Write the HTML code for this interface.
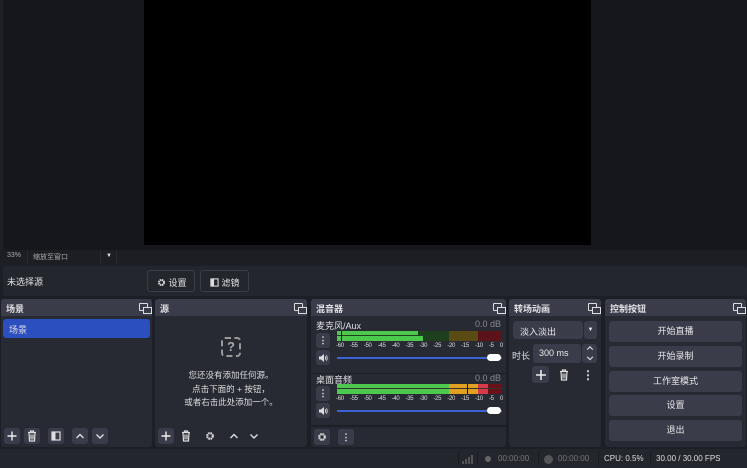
<!DOCTYPE html>
<html><head><meta charset="utf-8"><style>
*{box-sizing:border-box;margin:0;padding:0}
body{width:747px;height:468px;background:#1d1f26;font-family:"Liberation Sans","Noto Sans CJK SC",sans-serif;color:#e0e0e4;position:relative;overflow:hidden;font-size:9px}
.a{position:absolute}
.panel{position:absolute;top:299px;height:148px;background:#272a33;border-radius:3px;overflow:hidden}
.hd{height:17px;background:#3a3d49;font-size:9px;font-weight:bold;padding:3px 5px;position:relative}
.hd i{position:absolute;right:4px;top:4px;width:9px;height:8px;border:1px solid #ddd;border-radius:1px}
.hd i:after{content:"";position:absolute;left:3px;top:3px;width:7px;height:5px;border:1px solid #ddd;background:#3a3d49}
.btn{position:absolute;background:#3a3d49;border-radius:3px;color:#e8e8ea;text-align:center}
.ib{position:absolute;width:16px;height:16px;border-radius:3px;color:#ddd;font-size:12px;text-align:center;line-height:16px}
.ib svg,.btn svg{position:absolute;left:50%;top:50%;transform:translate(-50%,-50%)}
.bar{position:absolute;height:4px}
.tick{position:absolute;width:167px;display:flex;justify-content:space-between;font-size:6px;color:#ddd;letter-spacing:-0.3px}
</style></head><body>
<svg width="0" height="0" style="position:absolute">
<defs>
<symbol id="tr" viewBox="0 0 10 12"><path d="M1 2.5h8M3.5 2.5V1h3v1.5M2 2.5l.5 8.5h5l.5-8.5M4 4.5v5M6 4.5v5" fill="none" stroke="#ddd" stroke-width="1.2"/></symbol>
<symbol id="up" viewBox="0 0 10 10"><path d="M1.5 7L5 3.5 8.5 7" fill="none" stroke="#ddd" stroke-width="1.4"/></symbol>
<symbol id="dn" viewBox="0 0 10 10"><path d="M1.5 3.5L5 7 8.5 3.5" fill="none" stroke="#ddd" stroke-width="1.4"/></symbol>
<symbol id="pl" viewBox="0 0 10 10"><path d="M5 0.5v9M0.5 5h9" stroke="#eee" stroke-width="1.4"/></symbol>
<symbol id="gr" viewBox="0 0 10 10"><circle cx="5" cy="5" r="2.8" fill="none" stroke="#ddd" stroke-width="2.2" stroke-dasharray="1.6 0.6"/><circle cx="5" cy="5" r="1.2" fill="#272a33"/></symbol>
<symbol id="sp" viewBox="0 0 10 10"><path d="M1 3.5h2L6 1v8L3 6.5H1z" fill="#ddd"/><path d="M7.2 3.3q1 1.7 0 3.4M8.4 2.3q1.6 2.7 0 5.4" fill="none" stroke="#ddd" stroke-width="0.9"/></symbol>
<symbol id="fl" viewBox="0 0 10 10"><rect x="1" y="1" width="8" height="8" fill="none" stroke="#ddd" stroke-width="1.2"/><rect x="1" y="1" width="3.5" height="8" fill="#ddd"/></symbol>
</defs></svg>
<div class="a" style="left:0;top:0;width:747px;height:250px;background:#15171c"></div>
<div class="a" style="left:0;top:0;width:3px;height:250px;background:#1e2026"></div>
<div class="a" style="left:144px;top:0;width:447px;height:245px;background:#000"></div>
<div class="a" style="left:0;top:250px;width:747px;height:14px;background:#1c1e24"></div>
<div class="a" style="left:7px;top:252px;font-size:7px;color:#aaa">33%</div>
<div class="a" style="left:27px;top:251px;width:1px;height:12px;background:#2a2d35"></div>
<div class="a" style="left:33px;top:252px;font-size:7px;color:#aaa">缩放至窗口</div>
<div class="a" style="left:100px;top:251px;width:1px;height:12px;background:#2a2d35"></div>
<div class="a" style="left:106px;top:253px;font-size:6px;color:#ddd">▼</div>
<div class="a" style="left:116px;top:251px;width:1px;height:12px;background:#2a2d35"></div>
<div class="a" style="left:3px;top:266px;width:744px;height:30px;background:#24262e;border-radius:3px"></div>
<div class="a" style="left:7px;top:275px;font-size:9px">未选择源</div>
<div class="a" style="left:147px;top:270px;width:48px;height:22px;border:1px solid #3a3d47;border-radius:3px;font-size:9px;padding:5px 0 0 9px"><svg width="9" height="9" style="vertical-align:-1px"><use href="#gr"/></svg> 设置</div>
<div class="a" style="left:200px;top:270px;width:49px;height:22px;border:1px solid #3a3d47;border-radius:3px;font-size:9px;padding:5px 0 0 9px"><svg width="9" height="9" style="vertical-align:-1px"><use href="#fl"/></svg> 滤镜</div>

<div class="panel" style="left:1px;width:151px"><div class="hd">场景<i></i></div>
<div class="a" style="left:2px;top:20px;width:147px;height:19px;background:#2c4fbf;border-radius:3px;padding:4px 6px">场景</div>
<div class="ib" style="left:3px;top:129px;background:#3a3d49"><svg width="10" height="10"><use href="#pl"/></svg></div>
<div class="ib" style="left:23px;top:129px;background:#3a3d49"><svg width="10" height="12"><use href="#tr"/></svg></div>
<div class="ib" style="left:47px;top:129px;background:#3a3d49"><svg width="10" height="10"><use href="#fl"/></svg></div>
<div class="ib" style="left:71px;top:129px;background:#3a3d49"><svg width="10" height="10"><use href="#up"/></svg></div>
<div class="ib" style="left:91px;top:129px;background:#3a3d49"><svg width="10" height="10"><use href="#dn"/></svg></div>
</div>

<div class="panel" style="left:155px;width:152px"><div class="hd">源<i></i></div>
<div class="a" style="left:66px;top:38px;width:20px;height:20px;border:2px dashed #999;border-radius:4px;color:#aaa;font-size:13px;text-align:center;line-height:16px;font-weight:bold">?</div>
<div class="a" style="left:0;top:70px;width:152px;text-align:center;font-size:8.5px;line-height:13.5px;color:#ddd">您还没有添加任何源。<br>点击下面的 + 按钮，<br>或者右击此处添加一个。</div>
<div class="ib" style="left:3px;top:129px;background:#3a3d49"><svg width="10" height="10"><use href="#pl"/></svg></div>
<div class="ib" style="left:23px;top:129px"><svg width="10" height="12"><use href="#tr"/></svg></div>
<div class="ib" style="left:47px;top:129px"><svg width="10" height="10"><use href="#gr"/></svg></div>
<div class="ib" style="left:71px;top:129px"><svg width="10" height="10"><use href="#up"/></svg></div>
<div class="ib" style="left:91px;top:129px"><svg width="10" height="10"><use href="#dn"/></svg></div>
</div>

<div class="panel" style="left:311px;width:195px"><div class="hd">混音器<i></i></div>
<div class="a" style="left:5px;top:20px;font-size:9px">麦克风/Aux</div>
<div class="a" style="right:5px;top:20px;font-size:9px;color:#888">0.0 dB</div>
<div class="btn" style="left:5px;top:34px;width:14px;height:15px;font-weight:bold;line-height:15px">⋮</div>
<div class="btn" style="left:5px;top:51px;width:14px;height:15px"><svg width="10" height="10"><use href="#sp"/></svg></div>
<div class="a" style="left:26px;top:32px;width:165px;height:10px;background:#1e3f1e"></div>
<div class="bar" style="left:26px;top:32px;width:81px;background:#4cc84c"></div>
<div class="bar" style="left:26px;top:37px;width:86px;background:#4cc84c;height:5px"></div>
<div class="a" style="left:138px;top:32px;width:29px;height:10px;background:#5a4a14"></div>
<div class="a" style="left:167px;top:32px;width:24px;height:10px;background:#5a1419"></div>
<div class="a" style="left:30px;top:32px;width:1px;height:10px;background:#111"></div>
<div class="tick" style="left:25px;top:44px"><span>-60</span><span>-55</span><span>-50</span><span>-45</span><span>-40</span><span>-35</span><span>-30</span><span>-25</span><span>-20</span><span>-15</span><span>-10</span><span>-5</span><span>0</span></div>
<div class="a" style="left:26px;top:58px;width:165px;height:2px;background:#3d62d6"></div>
<div class="a" style="left:176px;top:55px;width:14px;height:7px;background:#fff;border-radius:4px"></div>
<div class="a" style="left:0;top:74px;width:195px;height:1px;background:#1d1f26"></div>
<div class="a" style="left:5px;top:74px;font-size:9px">桌面音频</div>
<div class="a" style="right:5px;top:74px;font-size:9px;color:#888">0.0 dB</div>
<div class="btn" style="left:5px;top:87px;width:14px;height:15px;font-weight:bold;line-height:15px">⋮</div>
<div class="btn" style="left:5px;top:104px;width:14px;height:15px"><svg width="10" height="10"><use href="#sp"/></svg></div>
<div class="a" style="left:26px;top:85px;width:112px;height:10px;background:#4cc84c"></div>
<div class="a" style="left:138px;top:85px;width:29px;height:10px;background:#e0a020"></div>
<div class="a" style="left:167px;top:85px;width:10px;height:10px;background:#d83a4a"></div>
<div class="a" style="left:177px;top:85px;width:14px;height:10px;background:#6a1018"></div>
<div class="a" style="left:26px;top:89px;width:165px;height:1px;background:#333"></div>
<div class="a" style="left:156px;top:85px;width:1px;height:10px;background:#111"></div>
<div class="tick" style="left:25px;top:97px"><span>-60</span><span>-55</span><span>-50</span><span>-45</span><span>-40</span><span>-35</span><span>-30</span><span>-25</span><span>-20</span><span>-15</span><span>-10</span><span>-5</span><span>0</span></div>
<div class="a" style="left:26px;top:111px;width:165px;height:2px;background:#3d62d6"></div>
<div class="a" style="left:176px;top:108px;width:14px;height:7px;background:#fff;border-radius:4px"></div>
<div class="a" style="left:0;top:126px;width:195px;height:2px;background:#1d1f26"></div>
<div class="btn" style="left:3px;top:130px;width:16px;height:16px"><svg width="10" height="10"><use href="#gr"/></svg></div>
<div class="btn" style="left:27px;top:130px;width:16px;height:16px;line-height:16px;font-weight:bold">⋮</div>
</div>

<div class="panel" style="left:509px;width:92px"><div class="hd">转场动画<i></i></div>
<div class="btn" style="left:4px;top:22px;width:70px;height:18px;text-align:left;padding:4px 7px">淡入淡出</div>
<div class="btn" style="left:75px;top:22px;width:13px;height:18px;font-size:6px;line-height:18px">▼</div>
<div class="a" style="left:3px;top:50px">时长</div>
<div class="btn" style="left:24px;top:45px;width:48px;height:19px;text-align:left;padding:4px 6px">300 ms</div>
<div class="btn" style="left:73px;top:45px;width:15px;height:19px"><svg width="8" height="8" style="top:4px"><use href="#up"/></svg><svg width="8" height="8" style="top:14px"><use href="#dn"/></svg></div>
<div class="btn" style="left:23px;top:67px;width:17px;height:17px"><svg width="11" height="11"><use href="#pl"/></svg></div>
<div class="ib" style="left:47px;top:68px"><svg width="10" height="12"><use href="#tr"/></svg></div>
<div class="ib" style="left:71px;top:68px;font-weight:bold">⋮</div>
</div>

<div class="panel" style="left:605px;width:141px"><div class="hd">控制按钮<i></i></div>
<div class="btn" style="left:4px;top:22px;width:133px;height:21px;line-height:21px">开始直播</div>
<div class="btn" style="left:4px;top:47px;width:133px;height:21px;line-height:21px">开始录制</div>
<div class="btn" style="left:4px;top:72px;width:133px;height:21px;line-height:21px">工作室模式</div>
<div class="btn" style="left:4px;top:96px;width:133px;height:21px;line-height:21px">设置</div>
<div class="btn" style="left:4px;top:121px;width:133px;height:21px;line-height:21px">退出</div>
</div>

<div class="a" style="left:0;top:449px;width:747px;height:19px;background:#24262e"></div>
<div class="a" style="left:458px;top:452px;width:1px;height:14px;background:#1a1c22"></div>
<svg class="a" style="left:462px;top:454px" width="12" height="10"><rect x="0" y="7" width="2" height="3" fill="#555"/><rect x="3" y="5" width="2" height="5" fill="#555"/><rect x="6" y="3" width="2" height="7" fill="#555"/><rect x="9" y="1" width="2" height="9" fill="#555"/></svg>
<div class="a" style="left:477px;top:452px;width:1px;height:14px;background:#1a1c22"></div>
<div class="a" style="left:485px;top:456px;width:6px;height:6px;border-radius:50%;background:#666"></div>
<div class="a" style="left:498px;top:454px;font-size:8px;color:#777">00:00:00</div>
<div class="a" style="left:538px;top:452px;width:1px;height:14px;background:#1a1c22"></div>
<div class="a" style="left:544px;top:455px;width:9px;height:9px;border-radius:50%;background:#555"></div>
<div class="a" style="left:558px;top:454px;font-size:8px;color:#777">00:00:00</div>
<div class="a" style="left:598px;top:452px;width:1px;height:14px;background:#1a1c22"></div>
<div class="a" style="left:604px;top:454px;font-size:8px;color:#ddd">CPU: 0.5%</div>
<div class="a" style="left:650px;top:452px;width:1px;height:14px;background:#1a1c22"></div>
<div class="a" style="left:656px;top:454px;font-size:8px;color:#ddd">30.00 / 30.00 FPS</div>
</body></html>
